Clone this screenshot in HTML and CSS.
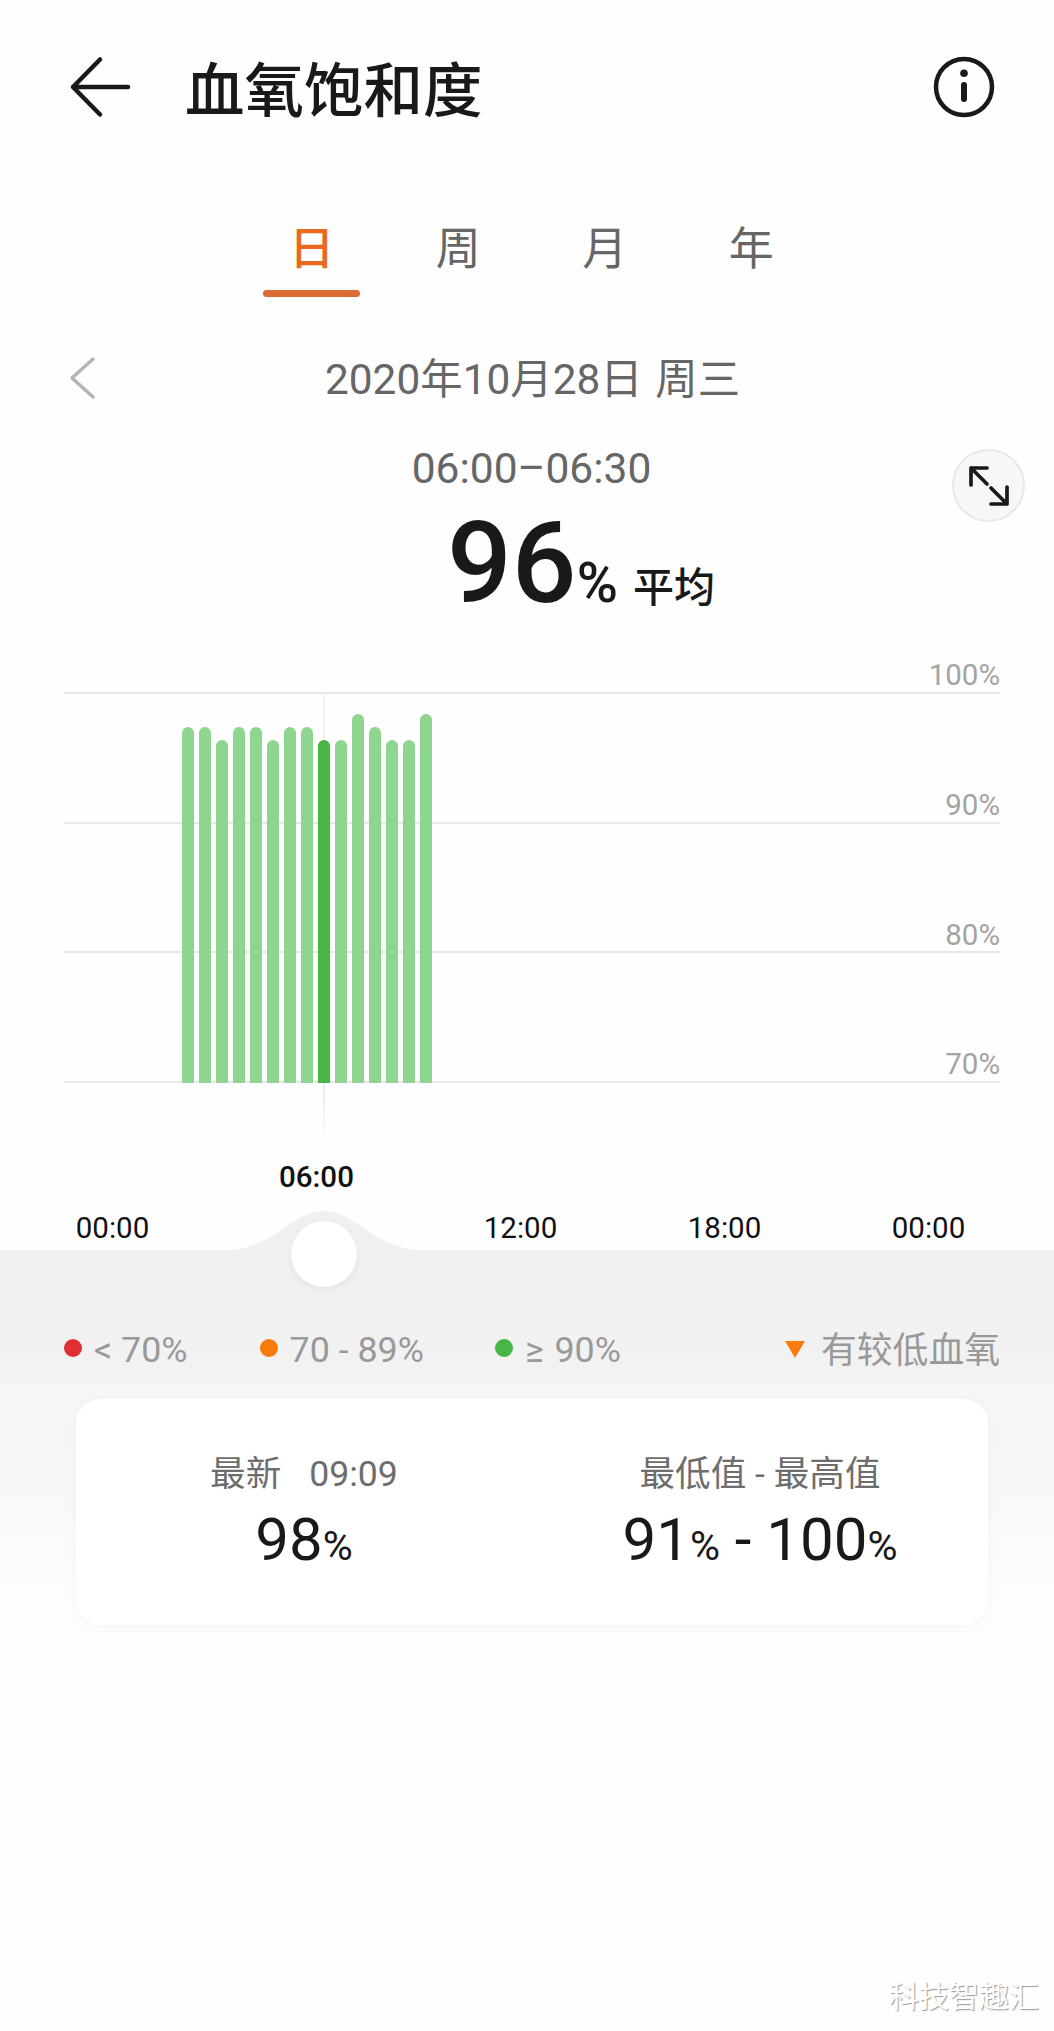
FILE: index.html
```html
<!DOCTYPE html>
<html lang="zh-CN">
<head>
    <meta charset="UTF-8">
    <meta name="viewport" content="width=device-width, initial-scale=1.0">
    <title>血氧饱和度</title>
    <link rel="stylesheet" href="styles.css">
</head>
<body>
    <header>
        <svg class="back" width="64" height="64" viewBox="0 0 64 64">
            <path d="M59 32H4M31 4.500L4 32L31 59.500"/>
        </svg>
        <h1>血氧饱和度</h1>
        <svg class="info" width="62" height="62" viewBox="0 0 62 62">
            <circle class="ring" cx="31" cy="31" r="28"/>
            <circle cx="31" cy="17.300" r="3.800"/>
            <rect x="28" y="26" width="6" height="20" rx="3"/>
        </svg>
    </header>

    <nav class="tabs">
        <a class="active">日</a>
        <a>周</a>
        <a>月</a>
        <a>年</a>
    </nav>

    <div class="date-row">
        <svg class="prev" width="28" height="44" viewBox="0 0 28 44">
            <path d="M25 3L4 22L25 41"/>
        </svg>
        <p>2020年10月28日 周三</p>
    </div>

    <section class="summary">
        <p class="range">06:00–06:30</p>
        <button class="expand">
            <svg width="44" height="44" viewBox="0 0 44 44">
                <path d="M20 20L4 4M4 21V4H20M24 24L40 40M40 23V40H24"/>
            </svg>
        </button>
        <p class="average"><b>96</b><span class="unit">%</span><span class="label">平均</span></p>
    </section>

    <section class="chart">
        <div class="lines">
            <div class="line">100%</div>
            <div class="line">90%</div>
            <div class="line">80%</div>
            <div class="line">70%</div>
        </div>
        <div class="cursor"></div>
        <div class="bars" id="bars"></div>
    </section>

    <div class="axis">
        <span>00:00</span>
        <span class="selected">06:00</span>
        <span>12:00</span>
        <span>18:00</span>
        <span>00:00</span>
    </div>

    <main>
        <!-- slider handle sitting on the hump -->
        <svg class="hump" width="220" height="40" viewBox="0 0 220 40">
            <path d="M4 40C62 40 76 0 110 0C144 0 158 40 216 40Z"/>
        </svg>
        <div class="handle"></div>

        <ul class="legend">
            <li><i class="dot red"></i>&lt; 70%</li>
            <li><i class="dot orange"></i>70 - 89%</li>
            <li><i class="dot green"></i>≥ 90%</li>
            <li class="low"><i class="triangle"></i><span>有较低血氧</span></li>
        </ul>

        <div class="card">
            <div class="stat">
                <p class="name">最新<span class="time">09:09</span></p>
                <p class="value">98<small>%</small></p>
            </div>
            <div class="stat">
                <p class="name">最低值 - 最高值</p>
                <p class="value">91<small>%</small> - 100<small>%</small></p>
            </div>
        </div>
    </main>

    <footer>科技智趣汇</footer>

    <script>
        var values = [97, 97, 96, 97, 97, 96, 97, 97, 96, 96, 98, 97, 96, 96, 98];
        var bars = document.getElementById('bars');

        values.forEach(function(value, index) {
            var bar = document.createElement('div');
            bar.className = index === 8 ? 'bar current' : 'bar';
            // 13px for every percent, counted down from 98%
            bar.style.height = (369.5 - (98 - value) * 13) + 'px';
            bars.appendChild(bar);
        });
    </script>
</body>
</html>
```
FILE: styles.css
```css
* {
    box-sizing: border-box;
}

body {
    font-family: Roboto, "Noto Sans CJK SC", sans-serif;
    margin: 0;
    min-height: 2031px;
    background-color: #fefefe;
    color: #191919;
    display: flex;
    flex-direction: column;
}

h1, p, ul {
    margin: 0;
    padding: 0;
    font-weight: normal;
}

svg {
    display: block;
    fill: none;
    stroke-linecap: round;
    stroke-linejoin: round;
}

header {
    display: flex;
    align-items: center;
    height: 174px;
    padding: 0 59px 0 69px;
}

header h1 {
    flex: 1;
    margin-left: 52px;
    padding-top: 9px;
    font-size: 59.500px;
    font-weight: 500;
    line-height: 80px;
}

.back {
    stroke: #191919;
    stroke-width: 4.500;
}

.info {
    fill: #191919;
}

.info .ring {
    fill: none;
    stroke: #191919;
    stroke-width: 4.500;
}

.tabs {
    display: flex;
    justify-content: center;
    gap: 49.500px;
    height: 87px;
    margin-top: 36px;
    padding-left: 9px;
}

.tabs a {
    width: 97px;
    font-size: 45px;
    line-height: 80px;
    text-align: center;
    color: #666;
}

.tabs .active {
    color: #e9691e;
    font-weight: 500;
}

.tabs .active::after {
    content: "";
    display: block;
    height: 7px;
    border-radius: 4px;
    background-color: #dd6b35;
}

.date-row {
    display: grid;
    grid-template-columns: 1fr auto 1fr;
    align-items: center;
    height: 82px;
    margin-top: 40px;
    padding: 0 57px 0 68px;
    color: #666;
    font-size: 42.400px;
    word-spacing: 2px;
}

.date-row p {
    margin-top: -6px;
}

.prev {
    stroke: #b5b5b5;
    stroke-width: 3.500;
}

.summary {
    display: grid;
    grid-template-columns: 1fr auto 1fr;
    grid-template-rows: 72px 120px;
    padding: 0 29px 0 38px;
    margin-top: 24px;
}

.range {
    grid-column: 2;
    padding-top: 6px;
    font-size: 42.500px;
    line-height: 40px;
    color: #666;
}

.expand {
    justify-self: end;
    width: 73px;
    height: 73px;
    margin-top: 6px;
    padding: 0;
    display: flex;
    align-items: center;
    justify-content: center;
    border: 2px solid #e8e8e8;
    border-radius: 50%;
    background-color: #f7f7f7;
}

.expand svg {
    stroke: #191919;
    stroke-width: 3.700;
}

.average {
    grid-column: 1 / 4;
    padding-left: 99px;
    text-align: center;
    line-height: 96px;
    white-space: nowrap;
}

.average b {
    font-size: 114px;
    font-weight: 500;
}

.average .unit {
    font-size: 56px;
    font-weight: 500;
}

.average .label {
    margin-left: 15px;
    font-size: 41px;
    font-weight: 500;
}

.chart {
    position: relative;
    display: grid;
    margin: 22px 54px 0 64px;
}

.lines, .bars {
    grid-area: 1 / 1;
}

.line {
    height: 129.700px;
    padding-top: 96px;
    border-bottom: 2px solid #e8e8e8;
    font-size: 29.500px;
    line-height: 30px;
    text-align: right;
    color: #a3a3a3;
}

.line:first-child {
    height: 37px;
    padding-top: 3px;
}

.bars {
    position: relative;
    display: flex;
    align-items: flex-end;
    gap: 5px;
    padding-left: 118px;
}

.bar {
    width: 12px;
    border-radius: 6px 6px 0 0;
    background-color: #8ed68f;
}

.bar.current {
    background-color: #47b547;
}

/* marks the selected time, behind the bars */
.cursor {
    position: absolute;
    left: 259px;
    top: 37px;
    width: 2px;
    height: 450px;
    background: linear-gradient(#f3f3f3, #e6e6e6 85%, #fefefe);
}

.axis {
    display: grid;
    grid-template-columns: repeat(5, 204px);
    align-items: end;
    height: 95px;
    margin-top: 72px;
    padding-left: 10.500px;
    font-size: 29.500px;
    line-height: 44px;
    text-align: center;
    color: #111;
}

.axis .selected {
    align-self: start;
    font-weight: 500;
}

main {
    position: relative;
    height: 381px;
    background: linear-gradient(#f0f0f0, #f2f2f2 134px, #f6f6f6 134px, #f6f6f6 190px, #fefefe 370px);
}

.hump {
    position: absolute;
    left: 214px;
    top: -39px;
    fill: #f0f0f0;
}

.handle {
    position: absolute;
    left: 291px;
    top: -29px;
    width: 66px;
    height: 66px;
    border-radius: 50%;
    background-color: #fff;
    box-shadow: 0 2px 6px rgba(0, 0, 0, 0.06);
}

.legend {
    display: flex;
    padding: 76px 54px 0 64px;
    list-style: none;
    font-size: 35.800px;
    line-height: 44px;
    color: #999;
}

.legend li {
    display: flex;
    align-items: center;
    white-space: nowrap;
}

.legend li:nth-child(2) {
    margin-left: 72px;
}

.legend li:nth-child(3) {
    margin-left: 71px;
    word-spacing: 2px;
}

.legend .low {
    margin-left: auto;
}

.low span {
    padding-top: 3px;
}

.dot {
    width: 18px;
    height: 18px;
    margin: 0 12px 4px 0;
    border-radius: 50%;
}

.red {
    background-color: #df2f33;
}

.orange {
    background-color: #fa7b0c;
}

.green {
    background-color: #47b547;
}

.triangle {
    width: 20px;
    height: 17px;
    margin-right: 16px;
    background-color: #fa7b0c;
    clip-path: polygon(0 0, 100% 0, 50% 100%);
}

.card {
    display: grid;
    grid-template-columns: 1fr 1fr;
    height: 226px;
    margin: 26px 66px 0 76px;
    padding-top: 53px;
    border-radius: 24px;
    background-color: #fff;
    box-shadow: 0 3px 14px rgba(0, 0, 0, 0.04);
    text-align: center;
}

.name {
    font-size: 35.600px;
    line-height: 44px;
    color: #6d6d6d;
}

.time {
    margin-left: 28px;
}

.value {
    font-size: 60px;
    line-height: 87px;
}

.value small {
    font-size: 41px;
}

footer {
    margin: auto 15px 16px auto;
    font-size: 30px;
    line-height: 36px;
    color: #fff;
    text-shadow: 1px 1px 1px #999;
}
```
